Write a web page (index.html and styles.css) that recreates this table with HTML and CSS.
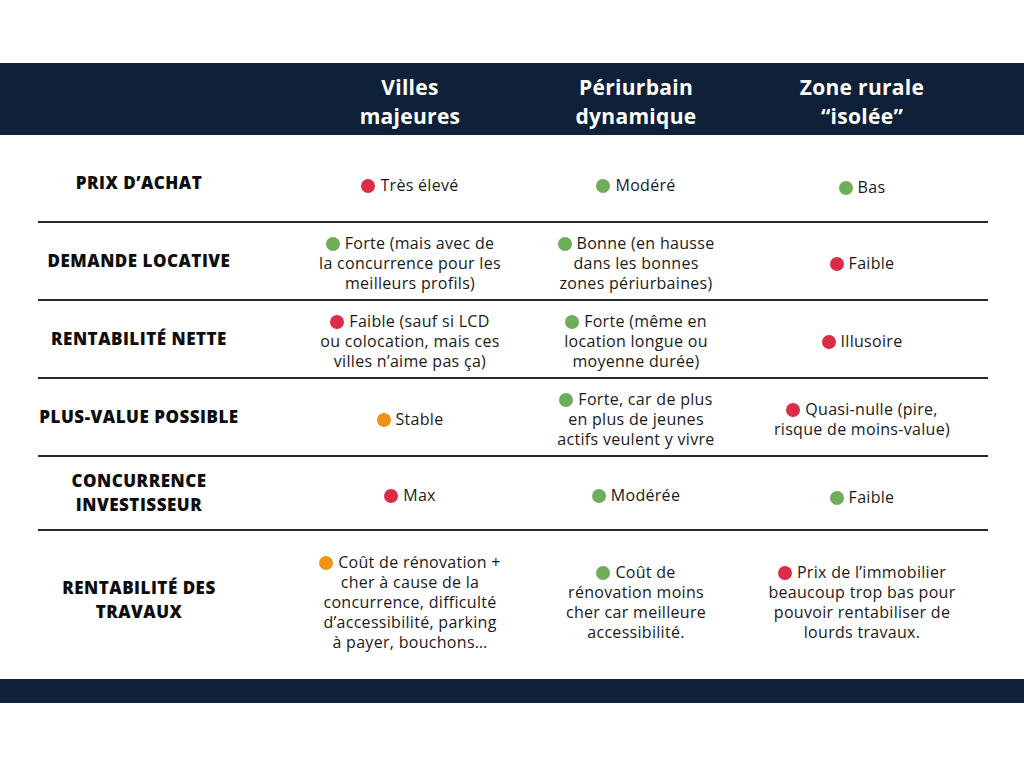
FILE: index.html
```html
<!DOCTYPE html>
<html lang="fr">
<head>
<meta charset="utf-8">
<title>Comparatif zones</title>
<link rel="stylesheet" href="styles.css">
</head>
<body>
<div class="page">
  <div class="band head-band">
    <div class="grid">
      <div class="label"></div>
      <div class="th">Villes<br>majeures</div>
      <div class="th">Périurbain<br>dynamique</div>
      <div class="th">Zone rurale<br>“isolée”</div>
    </div>
  </div>

  <div class="table">
    <div class="grid row">
      <div class="label">PRIX D’ACHAT</div>
      <div class="cell"><span class="dot red"></span>Très élevé</div>
      <div class="cell"><span class="dot green"></span>Modéré</div>
      <div class="cell low"><span class="dot green"></span>Bas</div>
    </div>
    <div class="grid row">
      <div class="label">DEMANDE LOCATIVE</div>
      <div class="cell"><span class="dot green"></span>Forte (mais avec de<br>la concurrence pour les<br>meilleurs profils)</div>
      <div class="cell"><span class="dot green"></span>Bonne (en hausse<br>dans les bonnes<br>zones périurbaines)</div>
      <div class="cell"><span class="dot red"></span>Faible</div>
    </div>
    <div class="grid row">
      <div class="label">RENTABILITÉ NETTE</div>
      <div class="cell"><span class="dot red"></span>Faible (sauf si LCD<br>ou colocation, mais ces<br>villes n’aime pas ça)</div>
      <div class="cell"><span class="dot green"></span>Forte (même en<br>location longue ou<br>moyenne durée)</div>
      <div class="cell"><span class="dot red"></span>Illusoire</div>
    </div>
    <div class="grid row">
      <div class="label">PLUS-VALUE POSSIBLE</div>
      <div class="cell"><span class="dot orange"></span>Stable</div>
      <div class="cell"><span class="dot green"></span>Forte, car de plus<br>en plus de jeunes<br>actifs veulent y vivre</div>
      <div class="cell"><span class="dot red"></span>Quasi-nulle (pire,<br>risque de moins-value)</div>
    </div>
    <div class="grid row short">
      <div class="label">CONCURRENCE<br>INVESTISSEUR</div>
      <div class="cell"><span class="dot red"></span>Max</div>
      <div class="cell"><span class="dot green"></span>Modérée</div>
      <div class="cell low"><span class="dot green"></span>Faible</div>
    </div>
    <div class="grid row tall">
      <div class="label">RENTABILITÉ DES<br>TRAVAUX</div>
      <div class="cell"><span class="dot orange"></span>Coût de rénovation +<br>cher à cause de la<br>concurrence, difficulté<br>d’accessibilité, parking<br>à payer, bouchons…</div>
      <div class="cell"><span class="dot green"></span>Coût de<br>rénovation moins<br>cher car meilleure<br>accessibilité.</div>
      <div class="cell"><span class="dot red"></span>Prix de l’immobilier<br>beaucoup trop bas pour<br>pouvoir rentabiliser de<br>lourds travaux.</div>
    </div>
  </div>

  <div class="band foot-band"></div>
</div>
</body>
</html>
```

FILE: styles.css
```css
* { box-sizing: border-box; }

html, body {
  margin: 0;
  padding: 0;
  background: #ffffff;
}

body {
  font-family: "Open Sans", "Noto Sans", "DejaVu Sans", sans-serif;
  color: #161616;
}

.page {
  width: 1024px;
  height: 768px;
  padding-top: 63px;
}

.band {
  background: #0f2039;
  width: 100%;
}

.head-band {
  height: 72px;
  display: flex;
  align-items: center;
}

.foot-band {
  height: 24px;
}

.grid {
  display: grid;
  grid-template-columns: 259px 226px 226px 226px;
  margin-left: 38px;
  width: 950px;
  align-items: center;
}

.th {
  color: #ffffff;
  font-weight: 700;
  font-size: 21px;
  line-height: 29px;
  letter-spacing: 0.3px;
  text-align: center;
  padding-top: 5px;
}

.table {
  padding-top: 10px;
  padding-bottom: 10px;
}

.row {
  height: 78px;
  border-bottom: 2px solid #2a2a2a;
}

.row.short {
  height: 74px;
}

.row.tall {
  height: 138px;
  border-bottom: none;
}

.label {
  padding-right: 57px;
  text-align: center;
  font-weight: 800;
  font-size: 17px;
  line-height: 24px;
  letter-spacing: 0.5px;
  color: #0d0d0d;
}

.cell {
  text-align: center;
  font-size: 16px;
  line-height: 20px;
  letter-spacing: 0.3px;
  color: #1a1a1a;
  padding-top: 4px;
}

.cell.low {
  padding-top: 8px;
}

.dot {
  display: inline-block;
  width: 14px;
  height: 14px;
  border-radius: 50%;
  margin-right: 5px;
  vertical-align: -2px;
}

.dot.red { background: #db2d47; }
.dot.green { background: #70ad5a; }
.dot.orange { background: #f0921a; }
```
